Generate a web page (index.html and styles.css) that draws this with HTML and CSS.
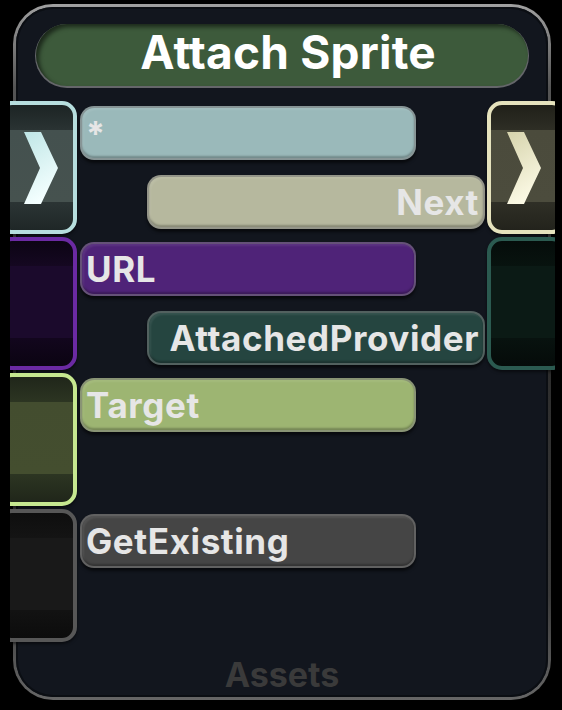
FILE: index.html
```html
<!DOCTYPE html>
<html>
<head>
<meta charset="utf-8">
<link rel="stylesheet" href="styles.css">
</head>
<body>
<div class="viewport">
  <div class="node">
    <div class="title">Attach Sprite</div>
    <div class="rows">
      <div class="row">
        <div class="pin left exec-in">
          <svg class="chev" width="34" height="72" viewBox="0 0 34 72">
            <defs><linearGradient id="gIn" x1="0" y1="0" x2="0.3" y2="1"><stop offset="0" stop-color="#bfe6e6"/><stop offset="1" stop-color="#f4ffff"/></linearGradient></defs>
            <polygon points="0,0 17,0 34,36 17,72 0,72 16,36" fill="url(#gIn)"/>
          </svg>
        </div>
        <div class="fields">
          <div class="field f-star">*</div>
          <div class="field out f-next">Next</div>
        </div>
        <div class="pin right exec-out">
          <svg class="chev" width="34" height="72" viewBox="0 0 34 72">
            <defs><linearGradient id="gOut" x1="0" y1="0" x2="0.3" y2="1"><stop offset="0" stop-color="#d6d3ac"/><stop offset="1" stop-color="#fbf9e4"/></linearGradient></defs>
            <polygon points="0,0 17,0 34,36 17,72 0,72 16,36" fill="url(#gOut)"/>
          </svg>
        </div>
      </div>
      <div class="row">
        <div class="pin left p-purple"></div>
        <div class="fields">
          <div class="field f-url">URL</div>
          <div class="field out f-prov">AttachedProvider</div>
        </div>
        <div class="pin right p-teal"></div>
      </div>
      <div class="row">
        <div class="pin left p-green"></div>
        <div class="fields">
          <div class="field f-target">Target</div>
        </div>
      </div>
      <div class="row">
        <div class="pin left p-gray"></div>
        <div class="fields">
          <div class="field f-get">GetExisting</div>
        </div>
      </div>
    </div>
    <div class="footer">Assets</div>
  </div>
</div>
</body>
</html>
```

FILE: styles.css
```css
html, body {
  margin: 0;
  padding: 0;
  background: #000;
}
body {
  font-family: Inter, "Open Sans", "DejaVu Sans", sans-serif;
}
.viewport {
  margin-left: 10px;
  width: 545px;
  height: 710px;
  overflow: hidden;
  padding-top: 4px;
  box-sizing: border-box;
}
.node {
  margin-left: 3px;
  width: 538px;
  height: 696px;
  box-sizing: border-box;
  border: 3px solid transparent;
  border-radius: 40px;
  background:
    linear-gradient(#12161e, #12161e) padding-box,
    linear-gradient(180deg, #a0a0a0 0%, #555 12%, #2c2c2c 50%, #3a3a3a 85%, #666 100%) border-box;
  box-shadow: inset 0 0 0 2px #0b0e13;
  display: flex;
  flex-direction: column;
}
.title {
  margin: 17px 20px 0;
  height: 62px;
  box-sizing: border-box;
  padding: 0 0 7px 12px;
  border-radius: 31px;
  background: #3d5a3b;
  box-shadow:
    inset 3px 3px 4px rgba(0, 0, 0, 0.55),
    0 1px 0 1px rgba(170, 170, 170, 0.55);
  display: flex;
  align-items: center;
  justify-content: center;
  color: #fff;
  font-weight: 700;
  font-size: 46px;
  letter-spacing: 0.2px;
  white-space: nowrap;
}
.rows {
  margin-top: 15px;
  display: flex;
  flex-direction: column;
  gap: 3px;
}
.row {
  display: flex;
  height: 133px;
}
.pin {
  flex: 0 0 80px;
  box-sizing: border-box;
  border: 4px solid;
  border-radius: 15px;
  display: flex;
  align-items: center;
  justify-content: center;
  box-shadow: 0 2px 3px rgba(0, 0, 0, 0.5);
}
.pin.left {
  margin-left: -19px;
}
.pin.right {
  margin-left: 2px;
}
.exec-in .chev {
  margin-left: 7px;
}
.exec-out .chev {
  margin-right: 6px;
}
.exec-in {
  border-color: #b6dede;
  background: linear-gradient(180deg, #1c2424 0%, #2a3333 20%, #44514f 20%, #46524f 78%, #2b3434 78%, #1f2727 100%);
}
.exec-out {
  border-color: #e5e2bd;
  background: linear-gradient(180deg, #202019 0%, #2e2e25 20%, #4b4b3c 20%, #4c4c3d 78%, #2f2f26 78%, #23231c 100%);
}
.p-purple {
  border-color: #6b2aa3;
  background: linear-gradient(180deg, #0c0414 0%, #150821 20%, #1b0a2c 20%, #1b0a2c 78%, #12061d 78%, #0b0412 100%);
}
.p-teal {
  border-color: #2b5a50;
  background: linear-gradient(180deg, #050c0a 0%, #08130f 20%, #0b1a15 20%, #0b1a15 78%, #08120f 78%, #050b09 100%);
}
.p-green {
  border-color: #c6e890;
  background: linear-gradient(180deg, #20261a 0%, #2c3522 20%, #434d2f 20%, #444e2f 78%, #2c3522 78%, #20261a 100%);
}
.p-gray {
  border-color: #575757;
  background: linear-gradient(180deg, #0e0e0e 0%, #141414 20%, #191919 20%, #191919 78%, #121212 78%, #0c0c0c 100%);
}
.fields {
  flex: 0 0 405px;
  margin-left: 3px;
  padding-top: 5px;
  display: flex;
  flex-direction: column;
  gap: 15px;
}
.field {
  box-sizing: border-box;
  height: 54px;
  width: 336px;
  border-radius: 14px;
  padding: 0 4px;
  display: flex;
  align-items: center;
  color: #e6e6e6;
  font-size: 35px;
  letter-spacing: 0.6px;
  font-weight: 700;
  white-space: nowrap;
  border: 2px solid rgba(120, 120, 120, 0.55);
  box-shadow:
    0 3px 3px rgba(0, 0, 0, 0.55),
    inset 0 -2px 2px rgba(0, 0, 0, 0.25),
    inset 2px 2px 2px rgba(255, 255, 255, 0.08);
}
.field.out {
  align-self: flex-end;
  width: 338px;
  justify-content: flex-end;
  padding: 0 4px 0 4px;
}
.f-star { background: #9ab9ba; font-size: 34px; }
.f-next { background: #b6b89e; }
.f-url { background: #4f2378; }
.f-prov { background: #254540; }
.f-target { background: #9db572; }
.f-get { background: #454545; }
.footer {
  margin-top: auto;
  text-align: center;
  font-size: 34px;
  font-weight: 700;
  line-height: 34px;
  color: #3a3a3a;
  padding-bottom: 5px;
}
```
